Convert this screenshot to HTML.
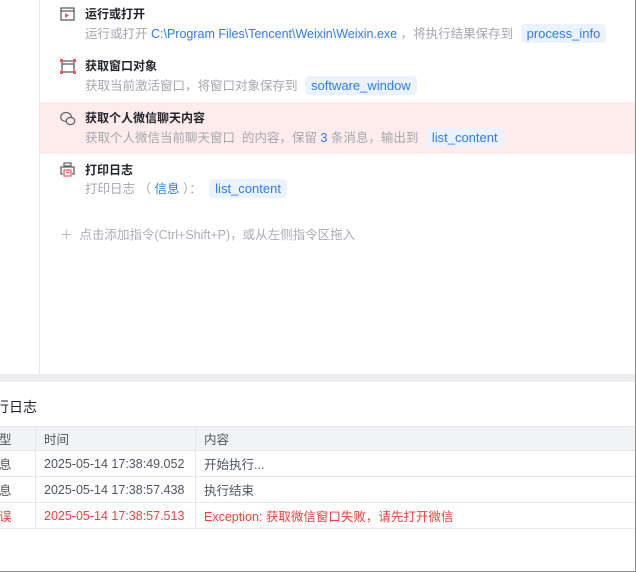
<!DOCTYPE html>
<html><head><meta charset="utf-8"><style>
*{margin:0;padding:0;box-sizing:border-box}
body{width:636px;height:572px;overflow:hidden;background:#fff;font-family:"Liberation Sans","Noto Sans CJK SC",sans-serif;position:relative;color:#1f2329}
.vl{position:absolute;left:39px;top:0;width:1px;height:374px;background:#e8e9ec}
.rb{position:absolute;right:0;top:0;width:1px;height:572px;background:#8a8a8a}
.bb{position:absolute;left:0;bottom:0;width:636px;height:1px;background:#8a8a8a}
.hl{position:absolute;left:40px;top:102px;width:595px;height:52px;background:#fdeceb}
.t{position:absolute;left:85px;font-size:12px;font-weight:bold;color:#1f2329;white-space:nowrap}
.s{position:absolute;left:85px;font-size:12.5px;color:#a3a7ae;white-space:nowrap}
.b{color:#2f7bf5}
.tag{display:inline-block;background:#eaf3ff;color:#2f7bf5;border-radius:4px;padding:0 6px;height:19px;line-height:19px;font-size:13px;margin-left:4px}
.ic{position:absolute;left:60px}
.band{position:absolute;left:0;top:374px;width:635px;height:8px;background:#ebedf0}
.lt{position:absolute;left:-5px;top:397px;font-size:14px;color:#1f2329}
table{position:absolute;left:-10px;top:426px;border-collapse:collapse;font-size:12.5px;color:#4e5560;width:660px}
td{border:1px solid #e6e8eb;height:26px;padding:0 8px;white-space:nowrap}
tr.h td{background:#f2f3f5;height:24px}
tr.e td{color:#f53f3f}
</style></head><body>
<div class="vl"></div>
<div class="hl"></div>
<svg class="ic" style="top:7px" width="15" height="14" viewBox="0 0 15 14"><rect x="1" y="1" width="13" height="12" fill="none" stroke="#5d6168" stroke-width="1.3"/><line x1="1" y1="4" x2="14" y2="4" stroke="#5d6168" stroke-width="1.3"/><path d="M5 6v5l4-2.5z" fill="#f05a5a"/></svg>
<div class="t" style="top:5px">运行或打开</div>
<div class="s" style="top:23px">运行或打开 <span class="b">C:\Program Files\Tencent\Weixin\Weixin.exe</span> ，将执行结果保存到 <span class="tag">process_info</span></div>
<svg class="ic" style="top:59px" width="16" height="15" viewBox="0 0 16 15"><rect x="2" y="2" width="12" height="11" fill="none" stroke="#5d6168" stroke-width="1.3"/><line x1="2" y1="5" x2="14" y2="5" stroke="#5d6168" stroke-width="1.3"/><g fill="#f05a5a"><rect x="0" y="0" width="3" height="3"/><rect x="13" y="0" width="3" height="3"/><rect x="0" y="12" width="3" height="3"/><rect x="13" y="12" width="3" height="3"/></g></svg>
<div class="t" style="top:57px">获取窗口对象</div>
<div class="s" style="top:75px">获取当前激活窗口，将窗口对象保存到 <span class="tag">software_window</span></div>
<svg class="ic" style="top:111px" width="16" height="15" viewBox="0 0 16 15"><ellipse cx="6" cy="6" rx="5.3" ry="4.5" fill="none" stroke="#5d6168" stroke-width="1.2"/><ellipse cx="10.5" cy="10" rx="4.3" ry="3.6" fill="#fdeceb" stroke="#5d6168" stroke-width="1.2"/></svg>
<div class="t" style="top:109px">获取个人微信聊天内容</div>
<div class="s" style="top:127px">获取个人微信当前聊天窗口&nbsp; 的内容，保留 <span class="b">3</span> 条消息，输出到 <span class="tag">list_content</span></div>
<svg class="ic" style="top:162px" width="15" height="15" viewBox="0 0 15 15"><rect x="4" y="1" width="7" height="3" fill="none" stroke="#5d6168" stroke-width="1.2"/><path d="M3 12H1V5h13v7h-2" fill="none" stroke="#5d6168" stroke-width="1.3"/><rect x="4" y="8" width="7" height="6" fill="none" stroke="#f05a5a" stroke-width="1.2"/><line x1="6" y1="10.5" x2="9" y2="10.5" stroke="#f05a5a"/></svg>
<div class="t" style="top:161px">打印日志</div>
<div class="s" style="top:178px">打印日志 （ <span class="b">信息</span> ）： <span class="tag">list_content</span></div>
<div class="s" style="left:60px;top:224px;color:#a9adb4">＋&nbsp; 点击添加指令(Ctrl+Shift+P)，或从左侧指令区拖入</div>
<div class="band"></div>
<div class="lt">行日志</div>
<table>
<tr class="h"><td style="width:45px">型</td><td style="width:160px">时间</td><td>内容</td></tr>
<tr><td>息</td><td>2025-05-14 17:38:49.052</td><td>开始执行...</td></tr>
<tr><td>息</td><td>2025-05-14 17:38:57.438</td><td>执行结束</td></tr>
<tr class="e"><td>误</td><td>2025-05-14 17:38:57.513</td><td>Exception: 获取微信窗口失败，请先打开微信</td></tr>
</table>
<div class="rb"></div><div class="bb"></div>
</body></html>
